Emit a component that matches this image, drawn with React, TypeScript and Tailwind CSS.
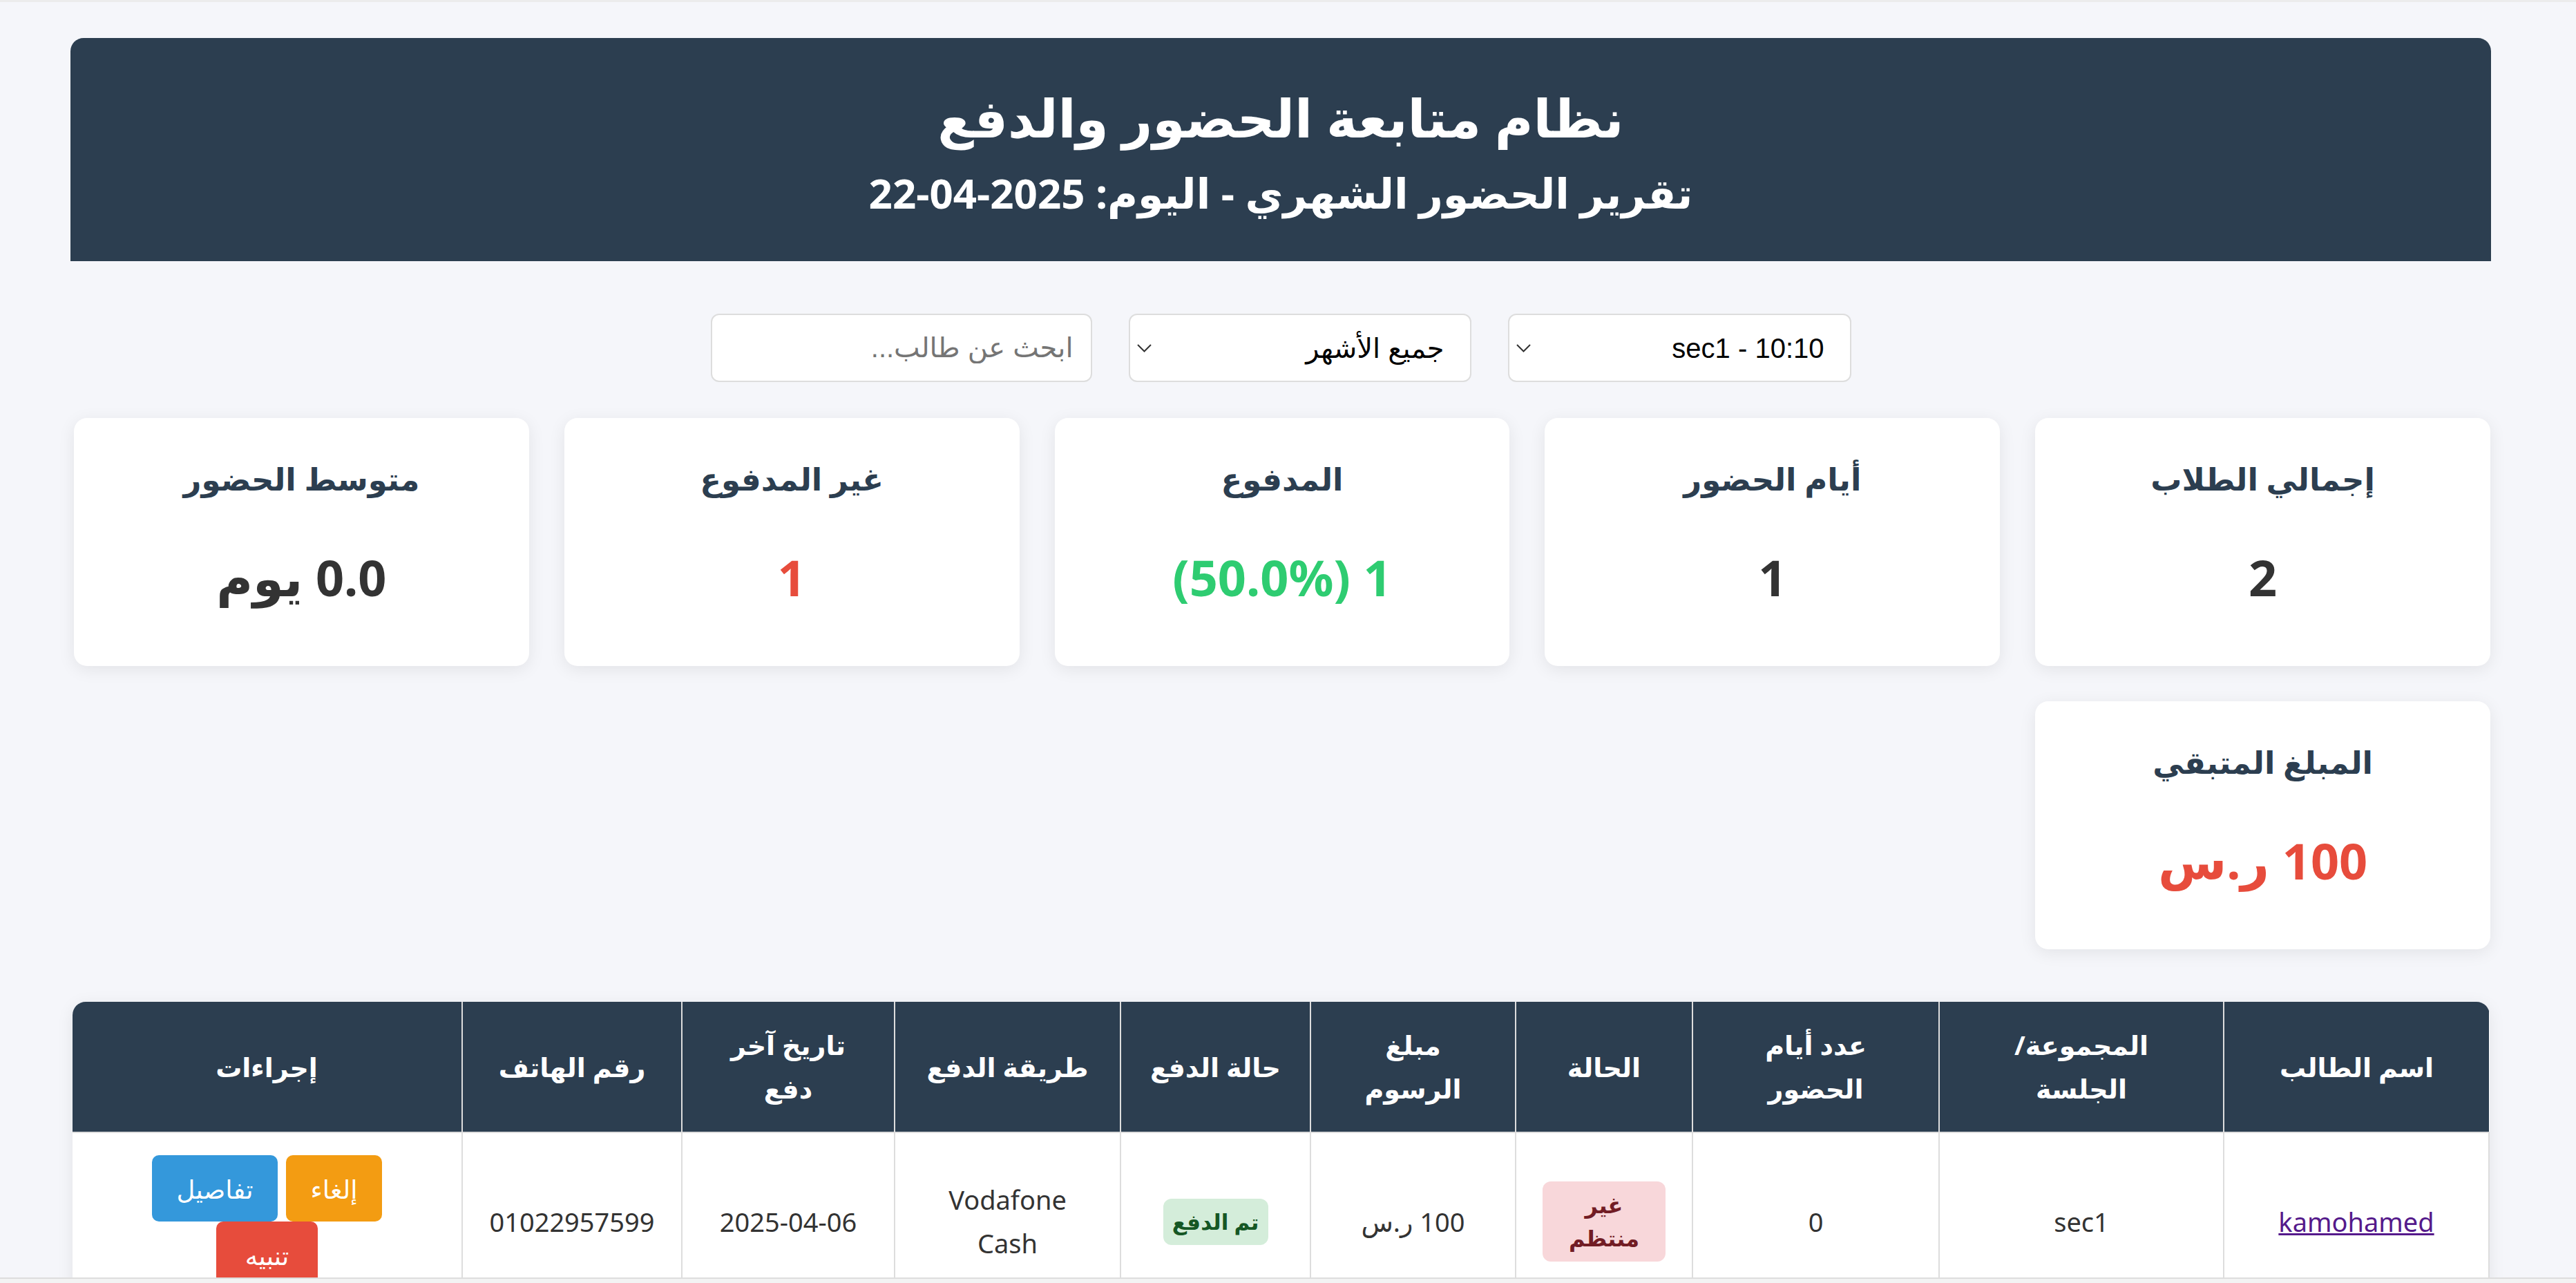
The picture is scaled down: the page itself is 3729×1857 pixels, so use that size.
import React from "react";

const stats = [
  { title: "إجمالي الطلاب", value: "2", color: "text-[#333333]" },
  { title: "أيام الحضور", value: "1", color: "text-[#333333]" },
  { title: "المدفوع", value: "1 (50.0%)", color: "text-[#2ecc71]" },
  { title: "غير المدفوع", value: "1", color: "text-[#e74c3c]" },
  { title: "متوسط الحضور", value: "0.0 يوم", color: "text-[#333333]" },
];

const colWidths = [384, 412, 357, 256, 297, 275, 327, 308, 318, 565];

const StatCard = ({ title, value, color }: { title: string; value: string; color: string }) => (
  <div className="bg-white rounded-[19px] shadow-[0_5px_24px_rgba(0,0,0,0.08)] h-[359px] pt-[55px] text-center">
    <h3 className="text-[45px] font-bold leading-[66px] text-[#2c3e50]">{title}</h3>
    <div className={`mt-[55px] text-[72px] font-bold leading-[108px] ${color}`}>{value}</div>
  </div>
);

const Chevron = () => (
  <svg width="21" height="12" viewBox="0 0 21 12" fill="none">
    <polyline points="1,1 10.5,10.5 20,1" stroke="#333333" strokeWidth="2" />
  </svg>
);

const FakeSelect = ({ label, width }: { label: string; width: string }) => (
  <div className={`${width} h-[99px] bg-white border-2 border-[#dddddd] rounded-[12px] flex items-center justify-between pr-[37px] pl-[10px] text-[40px] text-black font-['Liberation_Sans','DejaVu_Sans',sans-serif]`}>
    <span>{label}</span>
    <Chevron />
  </div>
);

export default function App() {
  return (
    <div dir="rtl" className="w-[3729px] h-[1857px] overflow-hidden bg-[#f5f6fa] text-[#333333] font-['Noto_Sans','DejaVu_Sans',sans-serif]">
      <div className="h-[1849px] overflow-hidden border-t-[3px] border-[#ececec] pl-[102px] pr-[123px]">
        {/* header */}
        <div className="mt-[52px] h-[323px] rounded-t-[19px] bg-[#2c3e50] pt-[69px] text-center text-white">
          <h1 className="text-[76px] font-bold leading-[91px]">نظام متابعة الحضور والدفع</h1>
          <h2 className="mt-[29px] text-[60px] font-bold leading-[70px]">تقرير الحضور الشهري - اليوم: 2025-04-22</h2>
        </div>

        {/* filters */}
        <div className="mt-[76px] flex justify-center gap-[53px]">
          <FakeSelect label="sec1 - 10:10" width="w-[497px]" />
          <FakeSelect label="جميع الأشهر" width="w-[496px]" />
          <input
            type="text"
            placeholder="ابحث عن طالب..."
            className="w-[552px] h-[99px] bg-white border-2 border-[#dddddd] rounded-[12px] px-[25px] text-[40px] outline-none placeholder:text-[#757575] font-['Liberation_Sans','DejaVu_Sans',sans-serif]"
          />
        </div>

        {/* stats */}
        <div className="mt-[52px] pr-[1px] pl-[5px] grid grid-cols-5 gap-[51px]">
          {stats.map((s) => (
            <StatCard key={s.title} {...s} />
          ))}
          <StatCard title="المبلغ المتبقي" value="100 ر.س" color="text-[#e74c3c]" />
        </div>

        {/* table */}
        <div className="mt-[76px] mr-[2px] ml-[3px] rounded-t-[19px] overflow-hidden bg-white shadow-[0_5px_24px_rgba(0,0,0,0.08)]">
          <table className="w-full table-fixed border-collapse">
            <colgroup>
              {colWidths.map((w, i) => (
                <col key={i} style={{ width: w }} />
              ))}
            </colgroup>
            <thead>
              <tr className="h-[189px] bg-[#2c3e50] text-white text-[38px] font-bold leading-[63px]">
                <th className="border-l-2 border-[#dddddd] px-[20px]">اسم الطالب</th>
                <th className="border-l-2 border-[#dddddd] px-[20px]">المجموعة/<br />الجلسة</th>
                <th className="border-l-2 border-[#dddddd] px-[20px]">عدد أيام<br />الحضور</th>
                <th className="border-l-2 border-[#dddddd] px-[20px]">الحالة</th>
                <th className="border-l-2 border-[#dddddd] px-[20px]">مبلغ<br />الرسوم</th>
                <th className="border-l-2 border-[#dddddd] px-[20px]">حالة الدفع</th>
                <th className="border-l-2 border-[#dddddd] px-[20px]">طريقة الدفع</th>
                <th className="border-l-2 border-[#dddddd] px-[20px]">تاريخ آخر<br />دفع</th>
                <th className="border-l-2 border-[#dddddd] px-[20px]">رقم الهاتف</th>
                <th className="px-[20px]">إجراءات</th>
              </tr>
            </thead>
            <tbody>
              <tr className="text-[38px] leading-[63px] text-center">
                <td className="border-2 border-[#dddddd] px-[20px] py-[32px]">
                  <a href="#" className="text-[#551a8b] underline">kamohamed</a>
                </td>
                <td className="border-2 border-[#dddddd] px-[20px] py-[32px]">sec1</td>
                <td className="border-2 border-[#dddddd] px-[20px] py-[32px]">0</td>
                <td className="border-2 border-[#dddddd] px-[20px] py-[32px]">
                  <span className="inline-flex w-[178px] h-[116px] items-center justify-center rounded-[12px] bg-[#f8d7da] text-[#721c24] text-[32px] font-bold leading-[48px]">
                    <span className="w-min">غير منتظم</span>
                  </span>
                </td>
                <td className="border-2 border-[#dddddd] px-[20px] py-[32px]">100 ر.س</td>
                <td className="border-2 border-[#dddddd] px-[20px] py-[32px]">
                  <span className="inline-flex w-[152px] h-[67px] items-center justify-center rounded-[12px] bg-[#d4edda] text-[#155724] text-[31px] font-bold">
                    تم الدفع
                  </span>
                </td>
                <td className="border-2 border-[#dddddd] px-[20px] py-[32px]">
                  <div className="w-min mx-auto">Vodafone Cash</div>
                </td>
                <td className="border-2 border-[#dddddd] px-[20px] py-[32px]">2025-04-06</td>
                <td className="border-2 border-[#dddddd] px-[20px] py-[32px]">01022957599</td>
                <td className="border-2 border-[#dddddd] px-[20px] py-[32px]">
                  <div className="w-[380px] mx-auto flex flex-wrap justify-center gap-x-[12px]">
                    <button className="w-[139px] h-[96px] rounded-[10px] bg-[#f39c12] text-white text-[37px]">إلغاء</button>
                    <button className="w-[182px] h-[96px] rounded-[10px] bg-[#3498db] text-white text-[37px]">تفاصيل</button>
                    <button className="w-[147px] h-[96px] rounded-[10px] bg-[#e74c3c] text-white text-[37px]">تنبيه</button>
                  </div>
                </td>
              </tr>
            </tbody>
          </table>
        </div>
      </div>
      <div className="h-[8px] border-t-2 border-[#dddddd] bg-[#f3f3f3]" />
    </div>
  );
}
